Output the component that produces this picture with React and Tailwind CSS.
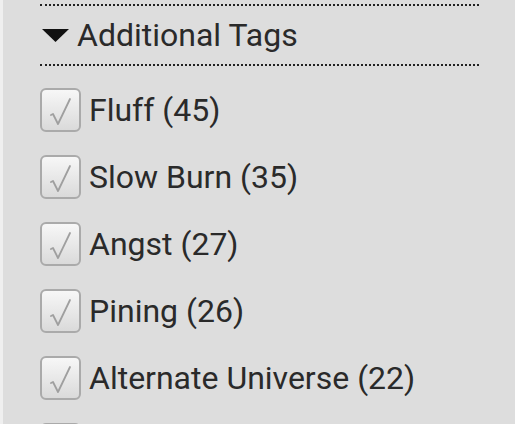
import React from "react";

const tags = [
  { name: "Fluff", count: 45 },
  { name: "Slow Burn", count: 35 },
  { name: "Angst", count: 27 },
  { name: "Pining", count: 26 },
  { name: "Alternate Universe", count: 22 },
];

// checkbox with the faint tick
const TagCheck = () => (
  <div className="w-[41px] h-[44px] shrink-0 rounded-[6px] border-2 border-[#aaaaaa] bg-gradient-to-b from-[#f7f7f7] to-[#dadada] flex items-center justify-center">
    <svg width="37" height="40" viewBox="0 0 37 40">
      <polyline
        points="9,25 11,24 16,34 28,9"
        fill="none"
        stroke="#9f9f9f"
        strokeWidth="1.8"
        strokeLinejoin="round"
        strokeLinecap="round"
      />
    </svg>
  </div>
);

const TagRow = ({ tag }) => (
  <label className="flex items-center gap-[8px] h-[44px] cursor-pointer">
    <TagCheck />
    <span className="text-[32px] leading-none font-normal text-[#2a2a2a]">
      {tag.name} ({tag.count})
    </span>
  </label>
);

export default function App() {
  return (
    <div
      className="flex w-[515px] h-[424px] overflow-hidden bg-[#efefef]"
      style={{ fontFamily: "Roboto, 'Liberation Sans', sans-serif" }}
    >
      <div className="w-[3px] shrink-0" />
      <div className="flex-1 bg-[#dddddd] pl-[37px]">
        <div className="w-[439px]">
          <div className="mt-[4px] border-t-2 border-dotted border-[#222]" />
          <div className="h-[58px] flex items-center gap-[8px]">
            <svg width="27" height="13" viewBox="0 0 27 13" className="ml-[2px] mt-[1px]">
              <polygon points="0,0 27,0 13.5,13" fill="#111" />
            </svg>
            <span className="text-[32px] leading-none font-normal text-[#2a2a2a]">Additional Tags</span>
          </div>
          <div className="border-t-2 border-dotted border-[#222]" />
          <div className="pt-[22px] flex flex-col gap-[23px]">
            {tags.map((t) => (
              <TagRow key={t.name} tag={t} />
            ))}
            {/* next row, only its box peeks in at the bottom */}
            <div className="h-[44px] flex items-center">
              <TagCheck />
            </div>
          </div>
        </div>
      </div>
    </div>
  );
}
